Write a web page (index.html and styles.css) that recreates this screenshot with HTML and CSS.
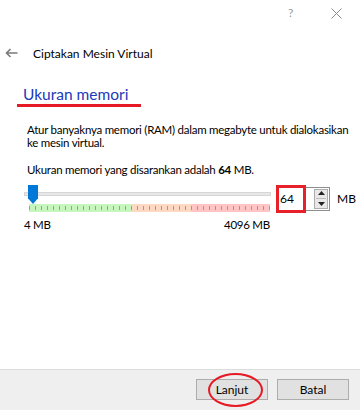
FILE: index.html
```html
<!DOCTYPE html>
<html>
<head>
<meta charset="utf-8">
<link rel="stylesheet" href="styles.css">
</head>
<body>
<div class="window">
  <div class="titlebar">
    <span class="help">?</span>
    <svg class="close" width="11" height="11" viewBox="0 0 11 11"><path d="M0.5 0.5 L10.5 10.5 M10.5 0.5 L0.5 10.5" stroke="#8a8a8a" stroke-width="1" fill="none"/></svg>
  </div>
  <div class="header">
    <svg class="back" width="13" height="10" viewBox="0 0 13 10"><path d="M12.5 5 H1.5 M5.5 1 L1.5 5 L5.5 9" stroke="#7a7a7a" stroke-width="1.6" fill="none"/></svg>
    <span class="title">Ciptakan Mesin Virtual</span>
  </div>
  <div class="content">
    <div class="heading"><span class="heading-text">Ukuran memori</span></div>
    <p class="desc">Atur banyaknya memori (RAM) dalam megabyte untuk dialokasikan ke mesin virtual.</p>
    <p class="rec">Ukuran memori yang disarankan adalah <b>64</b> MB.</p>
    <div class="slider-row">
      <div class="slider">
        <div class="track"></div>
        <div class="thumb"></div>
        <div class="ticks">
          <div class="seg green"></div>
          <div class="seg peach"></div>
          <div class="seg pink"></div>
        </div>
      </div>
      <div class="spin">
        <span class="spin-value">64</span>
        <div class="spin-btn">
          <svg width="7" height="4" viewBox="0 0 7 4"><path d="M0 4 L3.5 0 L7 4Z" fill="#222"/></svg>
          <div class="spin-sep"></div>
          <svg width="7" height="4" viewBox="0 0 7 4"><path d="M0 0 L3.5 4 L7 0Z" fill="#222"/></svg>
        </div>
        <div class="red-box"></div>
      </div>
      <span class="unit">MB</span>
    </div>
    <div class="labels"><span>4 MB</span><span>4096 MB</span></div>
  </div>
  <div class="footer">
    <div class="btn next">Lanjut<div class="ring"></div></div>
    <div class="btn">Batal</div>
  </div>
</div>
</body>
</html>
```
FILE: styles.css
```css
html, body {
  margin: 0;
  padding: 0;
  background: #fff;
}
.window {
  width: 360px;
  height: 410px;
  display: flex;
  flex-direction: column;
  font-family: Lato, "Noto Sans", sans-serif;
  font-size: 11.5px;
  letter-spacing: -0.25px;
  color: #000;
}
.titlebar {
  height: 26px;
  display: flex;
  align-items: center;
  justify-content: flex-end;
  padding-right: 18px;
  gap: 38px;
}
.help {
  color: #9a9a9a;
  font-size: 12px;
  line-height: 12px;
}
.close {
  display: block;
}
.header {
  display: flex;
  align-items: center;
  height: 20px;
  margin-top: 17px;
  padding-left: 5px;
}
.back {
  display: block;
  margin-right: 15px;
}
.title {
  font-size: 12px;
  letter-spacing: 0;
}
.content {
  padding-left: 27px;
}
.heading {
  margin-top: 21px;
  margin-left: -10px;
  width: 124px;
  border-bottom: 3px solid #e51a24;
  height: 20px;
  box-sizing: content-box;
}
.heading-text {
  display: block;
  padding-left: 6px;
  font-size: 15.5px;
  letter-spacing: 0;
  line-height: 20px;
  color: #1a39b8;
}
.desc {
  margin: 16px 0 0 0;
  line-height: 13px;
  width: 326px;
}
.rec {
  margin: 14px 0 0 0;
  line-height: 13px;
}
.slider-row {
  display: flex;
  align-items: center;
  margin-top: 9px;
  margin-left: -3px;
  height: 27px;
}
.slider {
  position: relative;
  width: 247px;
  height: 27px;
}
.track {
  position: absolute;
  left: 0;
  top: 7px;
  width: 247px;
  height: 4px;
  box-sizing: border-box;
  background: #e7e7e7;
  border: 1px solid #d6d6d6;
}
.thumb {
  position: absolute;
  left: 4px;
  top: 0;
  width: 10px;
  height: 19px;
  background: #0078d7;
  clip-path: polygon(0 0, 100% 0, 100% 70%, 50% 100%, 0 70%);
}
.ticks {
  position: absolute;
  left: 5px;
  top: 19px;
  width: 241px;
  height: 8px;
  display: flex;
}
.seg {
  height: 8px;
  background-image: repeating-linear-gradient(to right, #9b9b9b 0, #9b9b9b 1px, transparent 1px, transparent 6px);
  background-size: 100% 4px;
  background-repeat: no-repeat;
  background-position: 0 2px;
}
.green { width: 102px; background-color: #c6f6bd; }
.peach { width: 60px; background-color: #fdd9c4; }
.pink { width: 79px; background-color: #ffc5c5; }
.spin {
  position: relative;
  margin-left: 5px;
  width: 54px;
  height: 24px;
  box-sizing: border-box;
  border: 1px solid #8f8f8f;
  display: flex;
  align-items: center;
  justify-content: space-between;
  padding: 0 1px 0 3px;
}
.spin-value {
  font-size: 12px;
  letter-spacing: 0;
}
.spin-btn {
  width: 14px;
  height: 20px;
  box-sizing: border-box;
  border: 1px solid #adadad;
  background: #e8e8e8;
  display: flex;
  flex-direction: column;
  align-items: center;
  justify-content: space-around;
}
.spin-btn svg {
  display: block;
}
.spin-sep {
  width: 10px;
  height: 1px;
  background: #bcbcbc;
}
.red-box {
  position: absolute;
  left: -1px;
  top: -3px;
  width: 30px;
  height: 28px;
  box-sizing: border-box;
  border: 3px solid #e8202a;
}
.unit {
  margin-left: 7px;
  font-size: 12px;
  letter-spacing: 0;
}
.labels {
  display: flex;
  justify-content: space-between;
  width: 246px;
  margin-left: -3px;
  margin-top: 6px;
  line-height: 13px;
}
.footer {
  margin-top: auto;
  height: 41px;
  box-sizing: border-box;
  border-top: 1px solid #dcdcdc;
  background: #efefef;
  display: flex;
  align-items: center;
  justify-content: flex-end;
  gap: 9px;
  padding: 0 11px 2px 0;
}
.btn {
  position: relative;
  width: 72px;
  height: 21px;
  box-sizing: border-box;
  border: 1px solid #adadad;
  background: #e1e1e1;
  display: flex;
  align-items: center;
  justify-content: center;
  font-size: 12px;
  letter-spacing: 0;
}
.ring {
  position: absolute;
  left: 11px;
  top: -7px;
  width: 55px;
  height: 34px;
  box-sizing: border-box;
  border: 2.5px solid #e51a24;
  border-radius: 50%;
}
```
